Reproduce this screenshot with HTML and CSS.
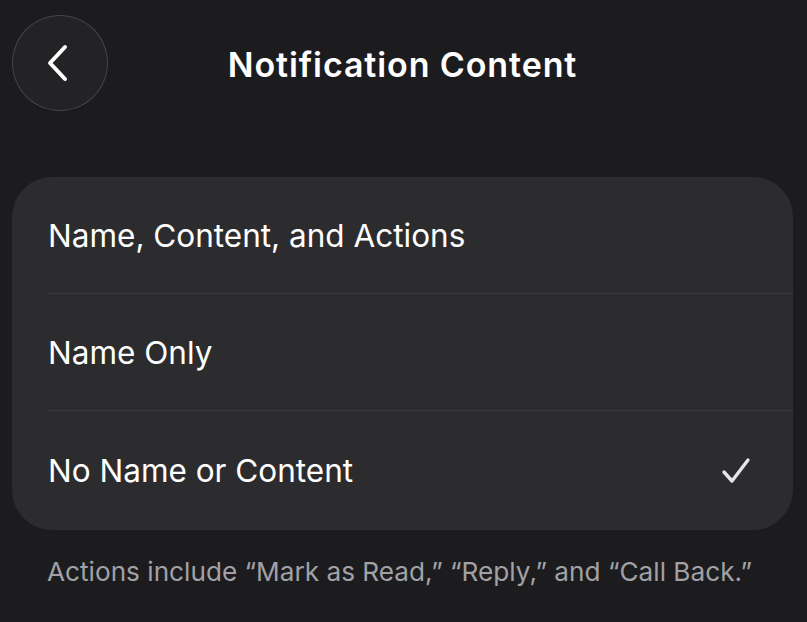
FILE: index.html
```html
<!DOCTYPE html>
<html>
<head>
<meta charset="utf-8">
<link rel="stylesheet" href="styles.css">
</head>
<body>
<div class="screen">
  <header class="nav">
    <button class="back" aria-label="Back">
      <svg width="24" height="38" viewBox="0 0 24 38"><path d="M19 3 L4 19 L19 35" fill="none" stroke="#fff" stroke-width="4" stroke-linecap="round" stroke-linejoin="round"/></svg>
    </button>
    <h1 class="title">Notification Content</h1>
  </header>
  <section class="card">
    <div class="row"><span>Name, Content, and Actions</span></div>
    <div class="row"><span>Name Only</span></div>
    <div class="row"><span>No Name or Content</span>
      <svg class="check" width="30" height="30" viewBox="0 0 30 30"><path d="M3 16 L11 25 L27 4" fill="none" stroke="#e5e5ea" stroke-width="3.4" stroke-linecap="round" stroke-linejoin="round"/></svg>
    </div>
  </section>
  <p class="footer">Actions include “Mark as Read,” “Reply,” and “Call Back.”</p>
</div>
</body>
</html>
```
FILE: styles.css
```css
html, body {
  margin: 0;
  padding: 0;
  background: #1c1c1e;
  font-family: Inter, "Noto Sans", sans-serif;
  color: #fff;
}
.screen {
  width: 807px;
  height: 622px;
  overflow: hidden;
  padding: 15px 14px 0 12px;
  box-sizing: border-box;
}
.nav {
  display: grid;
  grid-template-columns: 96px 1fr 96px;
  align-items: center;
  height: 96px;
}
.back {
  width: 96px;
  height: 96px;
  border-radius: 50%;
  border: 1.5px solid rgba(255,255,255,0.16);
  background: #232325;
  display: flex;
  align-items: center;
  justify-content: center;
  padding: 0 4px 0 0;
  box-sizing: border-box;
}
.title {
  margin: 0;
  text-align: center;
  font-size: 34px;
  font-weight: 600;
  letter-spacing: 0.9px;
  padding-right: 0;
  margin-top: 2px;
}
.card {
  margin-top: 66px;
  background: #2c2c2e;
  border-radius: 40px;
  padding-left: 36px;
}
.row {
  height: 117px;
  display: flex;
  align-items: center;
  justify-content: space-between;
  padding-right: 42px;
  font-size: 31.5px;
  letter-spacing: 0;
  border-bottom: 1.5px solid #3a3a3c;
  box-sizing: border-box;
}
.row:last-child {
  border-bottom: none;
  height: 119px;
}
.footer {
  margin: 26px 0 0 35px;
  font-size: 26.2px;
  color: #a1a1a6;
  letter-spacing: 0;
}
```
